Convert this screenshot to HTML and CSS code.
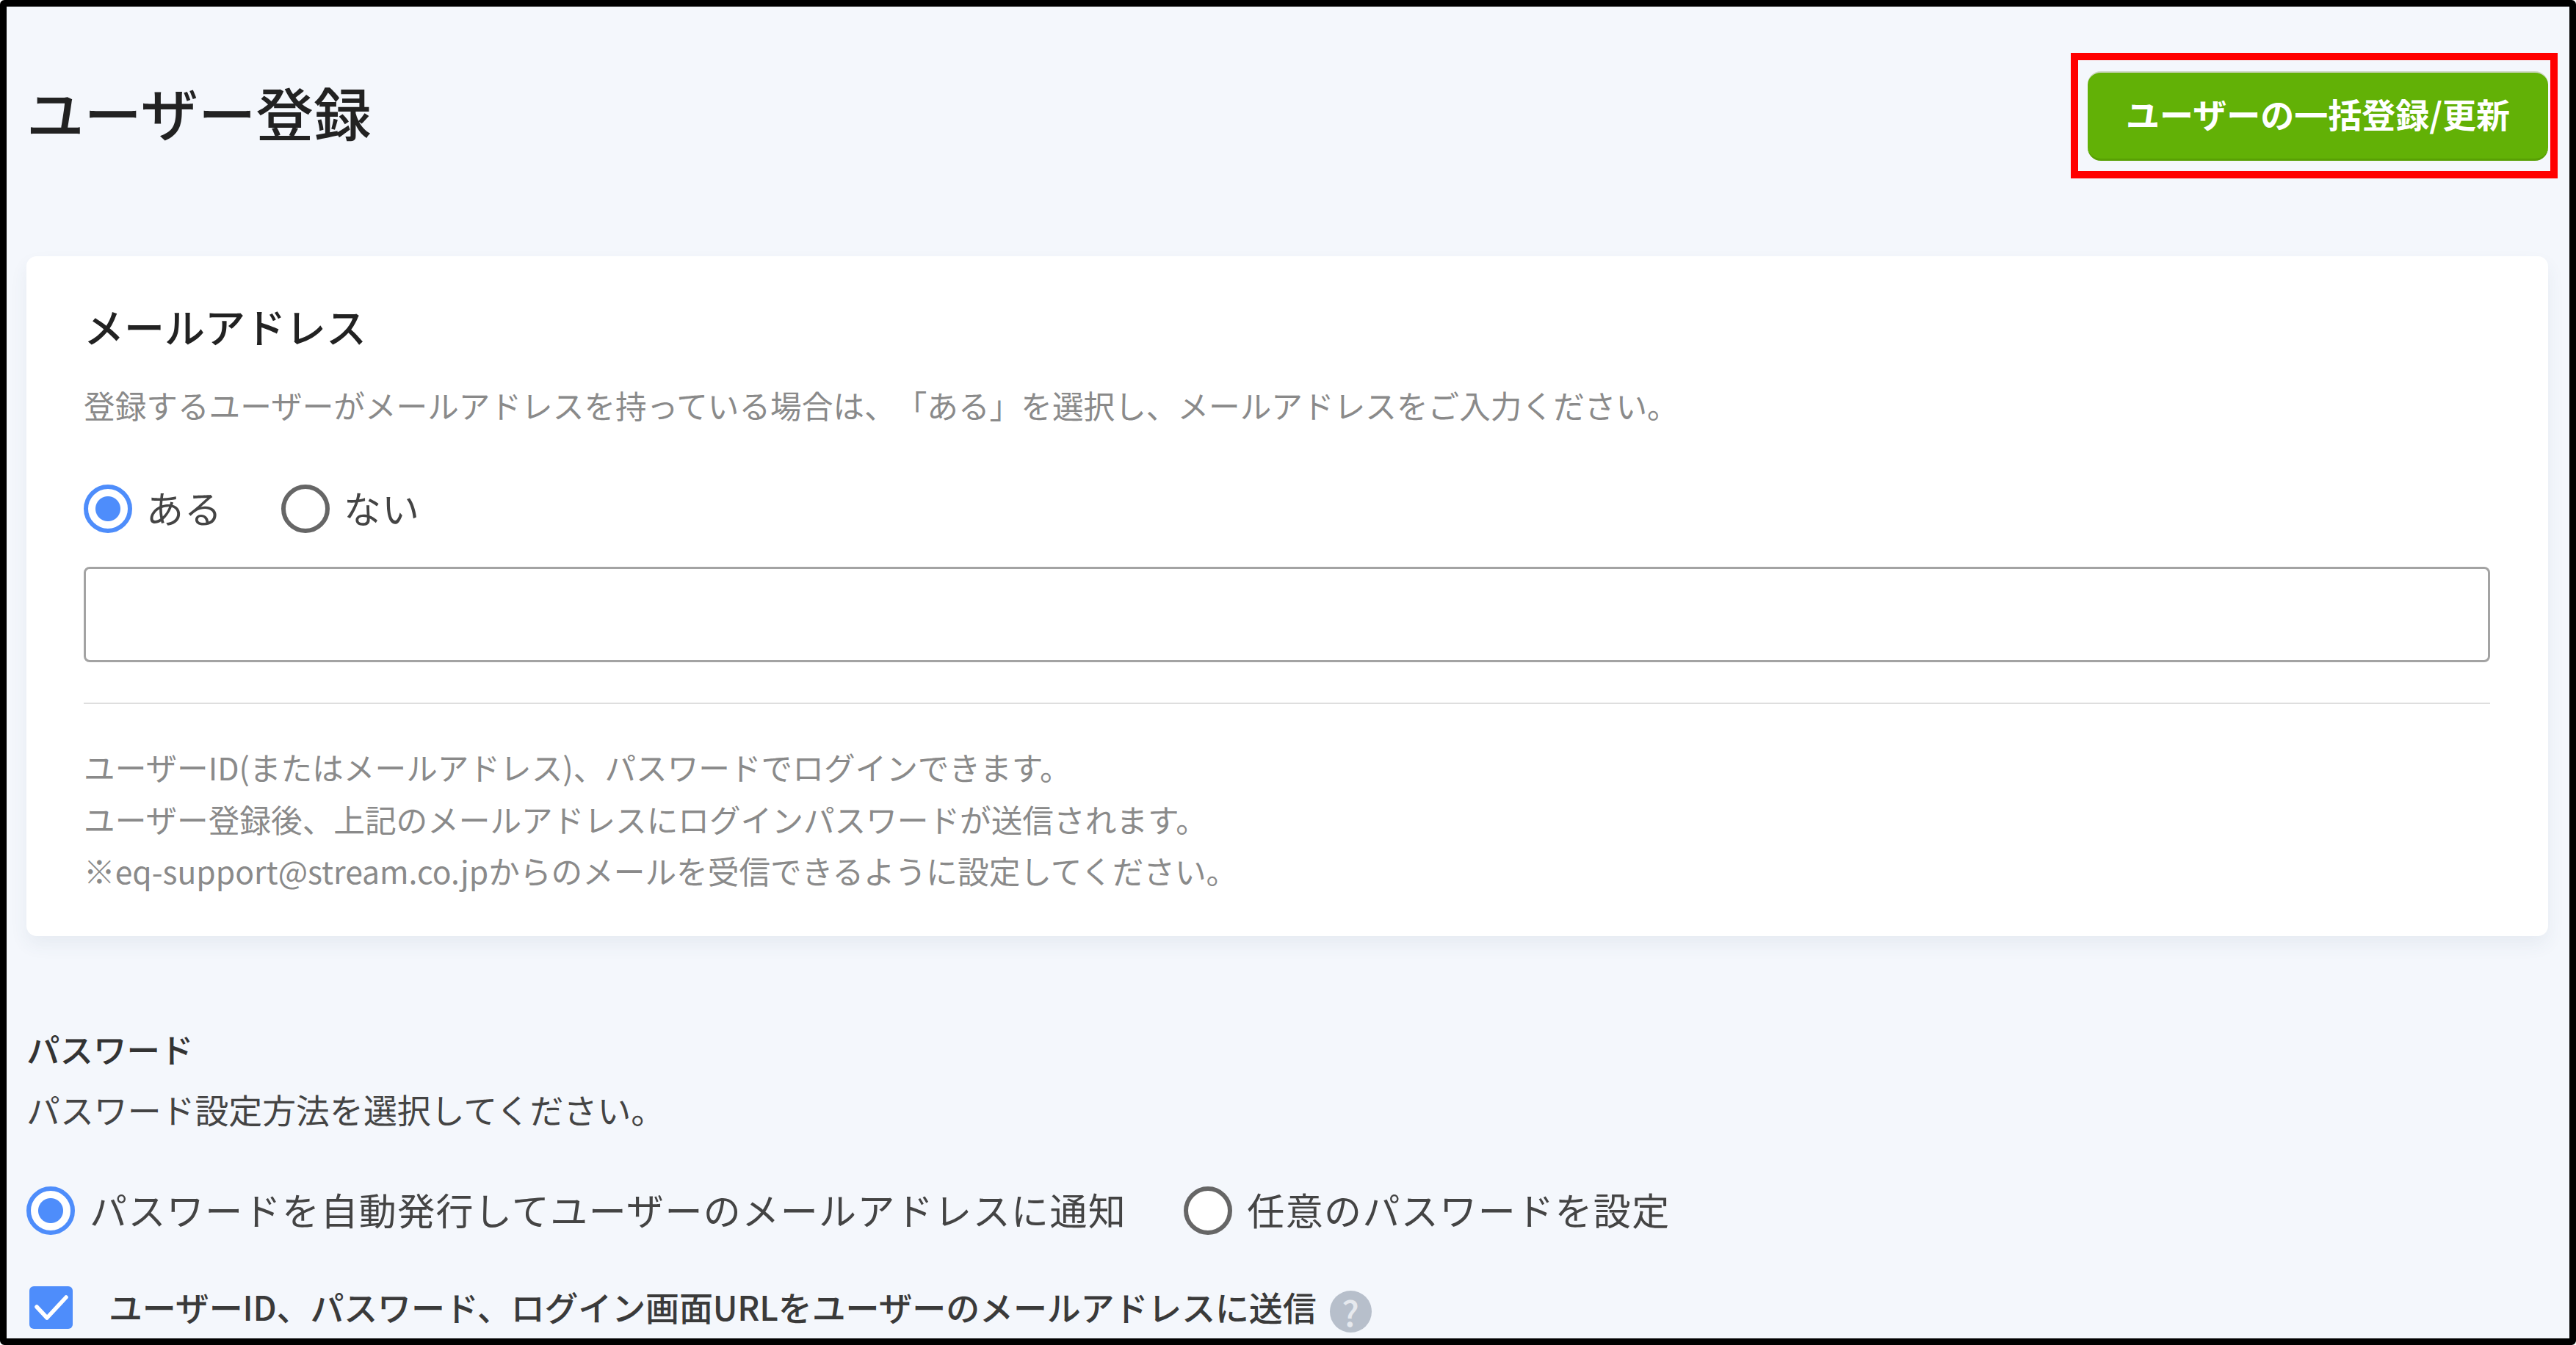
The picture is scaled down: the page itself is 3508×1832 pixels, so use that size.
FILE: index.html
```html
<!DOCTYPE html>
<html lang="ja">
<head>
<meta charset="utf-8">
<title>ユーザー登録</title>
<link rel="stylesheet" href="styles.css">
</head>
<body>
<div class="frame">
  <header class="page-header">
    <h1 class="page-title">ユーザー登録</h1>
    <div class="action">
      <button class="bulk-button" type="button">ユーザーの一括登録/更新</button>
      <span class="callout"></span>
    </div>
  </header>

  <section class="card">
    <h2 class="card-title">メールアドレス</h2>
    <p class="card-desc">登録するユーザーがメールアドレスを持っている場合は、「ある」を選択し、メールアドレスをご入力ください。</p>
    <div class="choices email-choices">
      <label class="choice"><span class="radio radio-on"></span><span class="choice-text">ある</span></label>
      <label class="choice"><span class="radio"></span><span class="choice-text">ない</span></label>
    </div>
    <div class="text-input"></div>
    <hr class="divider">
    <div class="notes">
      <p>ユーザーID(またはメールアドレス)、パスワードでログインできます。</p>
      <p>ユーザー登録後、上記のメールアドレスにログインパスワードが送信されます。</p>
      <p>※eq-support@stream.co.jpからのメールを受信できるように設定してください。</p>
    </div>
  </section>

  <section class="password">
    <h2 class="password-title">パスワード</h2>
    <p class="password-desc">パスワード設定方法を選択してください。</p>
    <div class="choices password-choices">
      <label class="choice"><span class="radio radio-on"></span><span class="choice-text">パスワードを自動発行してユーザーのメールアドレスに通知</span></label>
      <label class="choice"><span class="radio"></span><span class="choice-text">任意のパスワードを設定</span></label>
    </div>
    <div class="send-row">
      <span class="checkbox">
        <svg viewBox="0 0 59 58" width="59" height="58"><path d="M10 28 L24 43 L50 15" fill="none" stroke="#fff" stroke-width="5.5" stroke-linecap="round" stroke-linejoin="round"/></svg>
      </span>
      <span class="send-label">ユーザーID、パスワード、ログイン画面URLをユーザーのメールアドレスに送信</span>
      <span class="help">?</span>
    </div>
  </section>
</div>
</body>
</html>
```

FILE: styles.css
```css
* { box-sizing: border-box; }
html, body { margin: 0; padding: 0; background: #fff; }
body {
  font-family: "Noto Sans CJK JP", "Noto Sans", sans-serif;
  color: #333;
  text-spacing-trim: space-all;
}
.frame {
  width: 3508px;
  height: 1832px;
  border: 9px solid #000;
  border-radius: 6px;
  background: #f4f7fc;
  padding: 88px 29px 0 27px;
  overflow: hidden;
}
.page-header {
  display: flex;
  justify-content: space-between;
  align-items: center;
  margin-bottom: 130px;
}
.page-title {
  margin: 0;
  padding-bottom: 12px;
  font-size: 78.5px;
  line-height: 110px;
  font-weight: 500;
  color: #222;
}
.action { position: relative; }
.bulk-button {
  display: block;
  width: 627px;
  height: 122px;
  border: 0;
  border-top: 2px solid #cfd8c4;
  border-bottom: 3px solid #58a004;
  border-radius: 18px;
  background: #62b106;
  color: #fff;
  font: 700 46px/1 "Noto Sans CJK JP", sans-serif;
  padding: 0 0 8px;
}
.callout {
  position: absolute;
  left: -23px;
  top: -25px;
  width: 663px;
  height: 171px;
  border: 10px solid #f00;
  pointer-events: none;
}
.card {
  height: 926px;
  background: #fff;
  border-radius: 14px;
  padding: 56px 79px 0 78px;
  box-shadow: 0 12px 24px rgba(60, 80, 110, 0.07);
}
.card-title {
  margin: 0 0 36px;
  font-size: 55px;
  line-height: 76px;
  font-weight: 500;
  color: #222;
}
.card-desc {
  margin: 0 0 73px;
  font-size: 42.65px;
  line-height: 70px;
  color: #8a8a8a;
}
.choices { display: flex; align-items: center; }
.email-choices { gap: 80px; margin-bottom: 46px; }
.password-choices { gap: 78px; margin-bottom: 70px; }
.choice {
  display: flex;
  align-items: center;
  gap: 19px;
  font-size: 51px;
  line-height: 62px;
  letter-spacing: 1px;
  color: #444;
}
.choice-text { margin-bottom: 4px; }
.password-choices .choice { letter-spacing: 1.4px; gap: 20px; }
.radio {
  flex: none;
  width: 66px;
  height: 66px;
  border-radius: 50%;
  border: 6px solid #666;
  background: #fff;
}
.radio-on {
  border-color: #4e8dfb;
  background: radial-gradient(circle, #4e8dfb 0 16.5px, #fff 17.5px);
}
.text-input {
  height: 130px;
  border: 3px solid #a3a3a3;
  border-radius: 8px;
  background: #fff;
}
.divider {
  margin: 55px 0 51px;
  height: 2px;
  border: 0;
  background: #dedede;
}
.notes p {
  margin: 0;
  font-size: 42.65px;
  line-height: 70.5px;
  color: #8a8a8a;
}
.password { margin-top: 118px; }
.password-title {
  margin: 0 0 12px;
  font-size: 45.5px;
  line-height: 70px;
  font-weight: 500;
  color: #333;
}
.password-desc {
  margin: 0 0 71px;
  font-size: 45.9px;
  line-height: 70px;
  color: #444;
}
.send-row { display: flex; align-items: flex-start; padding-left: 4px; }
.checkbox {
  flex: none;
  width: 59px;
  height: 58px;
  border-radius: 6px;
  background: #4e8dfb;
  margin-right: 49px;
}
.checkbox svg { display: block; }
.send-label {
  font-size: 46px;
  line-height: 55px;
  font-weight: 500;
  letter-spacing: -0.15px;
  color: #3a3a3a;
  margin-bottom: 3px;
}
.help {
  flex: none;
  width: 57px;
  height: 57px;
  margin: 6px 0 0 18px;
  border-radius: 50%;
  background: #b7bfcb;
  color: #e6e9ee;
  font-size: 48px;
  font-weight: 500;
  line-height: 57px;
  text-align: center;
}
```
